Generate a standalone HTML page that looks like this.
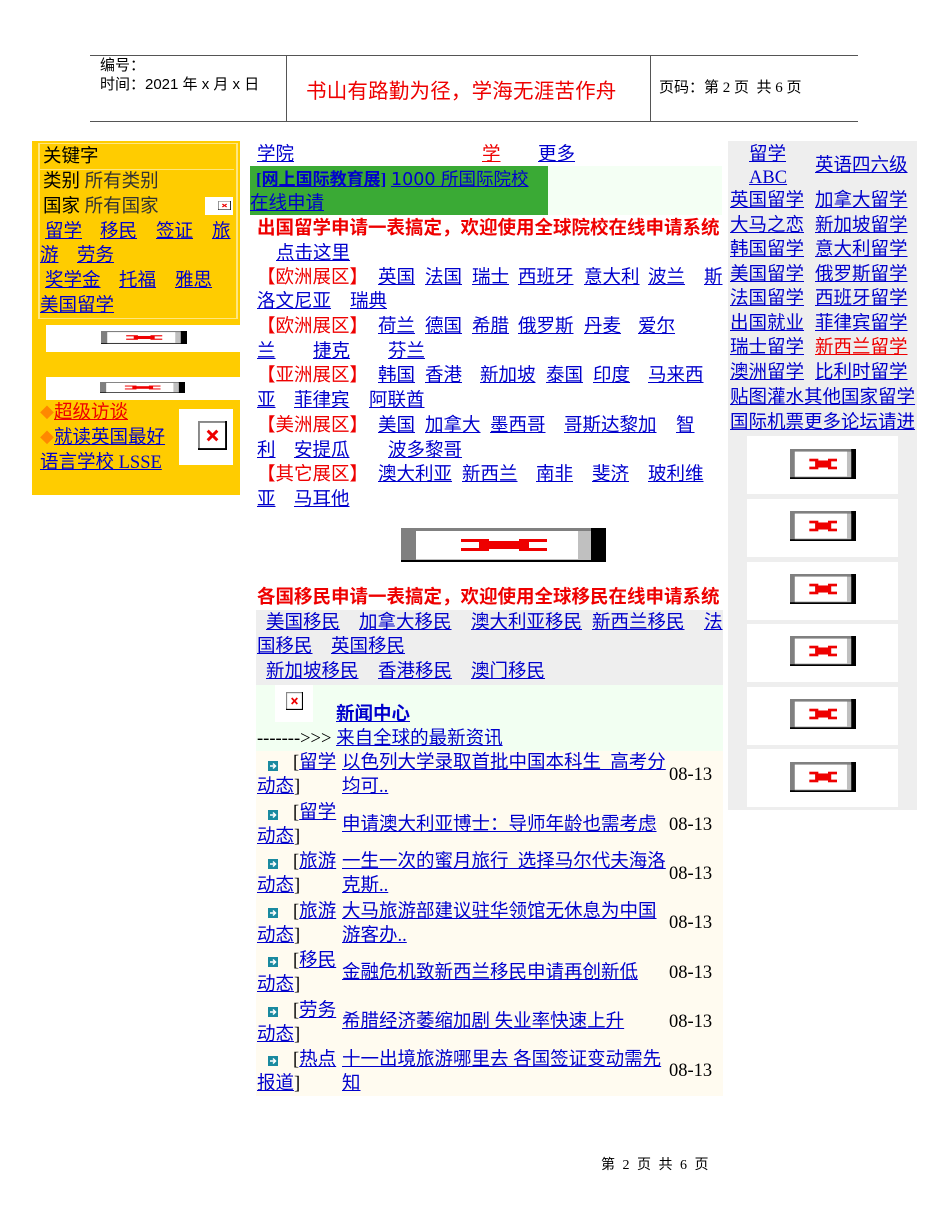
<!DOCTYPE html>
<html><head><meta charset="utf-8">
<style>
body{margin:0;width:950px;height:1230px;position:relative;background:#fff;font-family:"Liberation Serif","Noto Sans CJK SC",sans-serif;overflow:hidden}
.t{position:absolute;white-space:nowrap;line-height:24px;font-size:18.5px;font-family:"Liberation Serif","Noto Sans CJK SC",sans-serif}
a,.a{color:#0000cc;text-decoration:underline}
.r{color:#ee0000}
.b{font-weight:bold}
.box{position:absolute}
.ph{position:absolute;display:block}
</style></head><body>
<svg width="0" height="0" style="position:absolute"><defs>
<symbol id="ph" viewBox="0 0 205 34" preserveAspectRatio="none">
<rect width="205" height="34" fill="#000"/><rect width="190" height="32" fill="#808080"/>
<rect x="15" y="3" width="175" height="29" fill="#c0c0c0"/><rect x="15" y="3" width="162" height="28" fill="#fff"/>
<rect x="60" y="11" width="28" height="3" fill="#e00"/><rect x="60" y="20" width="28" height="3" fill="#e00"/>
<rect x="118" y="11" width="28" height="3" fill="#e00"/><rect x="118" y="20" width="28" height="3" fill="#e00"/>
<rect x="78" y="13" width="50" height="8" fill="#e00"/>
</symbol>
<symbol id="bx" viewBox="0 0 30 30" preserveAspectRatio="none">
<rect width="30" height="30" fill="#000"/><rect width="28" height="28" fill="#888"/><rect x="2" y="2" width="26" height="26" fill="#fff"/>
<path d="M10 10L20 20M20 10L10 20" stroke="#e00" stroke-width="3"/>
</symbol>
<symbol id="ar" viewBox="0 0 10 10">
<rect width="10" height="10" fill="#1a8aa0"/><path d="M2 5H7M5 2.5L7.5 5L5 7.5" stroke="#fff" stroke-width="1.5" fill="none"/>
</symbol>
</defs></svg>

<!-- header -->
<div class="box" style="left:90px;top:55px;width:768px;height:1px;background:#555"></div>
<div class="box" style="left:90px;top:121px;width:768px;height:1px;background:#555"></div>
<div class="box" style="left:286px;top:55px;width:1px;height:66px;background:#555"></div>
<div class="box" style="left:650px;top:55px;width:1px;height:66px;background:#555"></div>
<div class="t" style="left:100px;top:56px;font-size:15px;line-height:20px;font-family:'Liberation Sans','Noto Sans CJK SC',sans-serif">编号：</div>
<div class="t" style="left:100px;top:75px;font-size:15px;line-height:20px;font-family:'Liberation Sans','Noto Sans CJK SC',sans-serif">时间：2021 年 x 月 x 日</div>
<div class="t r" style="left:306px;top:76px;font-size:20.5px;line-height:26px;letter-spacing:0.2px;font-family:'Noto Sans CJK SC',sans-serif">书山有路勤为径，学海无涯苦作舟</div>
<div class="t" style="left:659px;top:78px;font-size:15px;line-height:20px">页码：第 2 页&nbsp; 共 6 页</div>

<!-- left panel -->
<div class="box" style="left:32px;top:141px;width:208px;height:354px;background:#ffcc00"></div>
<div class="box" style="left:38px;top:143px;width:196px;height:174px;border:1px solid #ffe680;border-left:2px solid #ffe680;border-right:2px solid #ffe680"></div>
<div class="box" style="left:40px;top:169px;width:194px;height:1px;background:#ffe680"></div>
<div class="t" style="left:43px;top:145px">关键字</div>
<div class="t" style="left:43px;top:170px">类别 <span style="color:#333">所有类别</span></div>
<div class="t" style="left:43px;top:195px">国家 <span style="color:#333">所有国家</span></div>
<div class="box" style="left:205px;top:197px;width:28px;height:18px;background:#fff"></div>
<svg class="ph" style="left:218px;top:201px" width="13" height="9"><use href="#bx"/></svg>
<div class="t" style="left:45px;top:220px"><a>留学</a></div>
<div class="t" style="left:100px;top:220px"><a>移民</a></div>
<div class="t" style="left:156px;top:220px"><a>签证</a></div>
<div class="t" style="left:212px;top:220px"><a>旅</a></div>
<div class="t" style="left:40px;top:244px"><a>游</a></div>
<div class="t" style="left:77px;top:244px"><a>劳务</a></div>
<div class="t" style="left:45px;top:269px"><a>奖学金</a></div>
<div class="t" style="left:119px;top:269px"><a>托福</a></div>
<div class="t" style="left:175px;top:269px"><a>雅思</a></div>
<div class="t" style="left:40px;top:294px"><a>美国留学</a></div>
<div class="box" style="left:46px;top:325px;width:194px;height:27px;background:#fff"></div>
<svg class="ph" style="left:101px;top:331px" width="86" height="13"><use href="#ph"/></svg>
<div class="box" style="left:46px;top:377px;width:194px;height:23px;background:#fff"></div>
<svg class="ph" style="left:100px;top:382px" width="85" height="11"><use href="#ph"/></svg>
<div class="t" style="left:40px;top:401px"><span style="color:#f80;font-size:14px">◆</span><a style="color:#ee0000">超级访谈</a></div>
<div class="t" style="left:40px;top:426px"><span style="color:#f80;font-size:14px">◆</span><a>就读英国最好</a></div>
<div class="t" style="left:40px;top:451px"><a>语言学校 LSSE</a></div>
<div class="box" style="left:179px;top:409px;width:54px;height:56px;background:#fff"></div>
<svg class="ph" style="left:198px;top:421px" width="29" height="29"><use href="#bx"/></svg>

<!-- middle -->
<div class="t" style="left:257px;top:143px"><a>学院</a></div>
<div class="t" style="left:482px;top:143px"><a style="color:#ee0000">学</a></div>
<div class="t" style="left:538px;top:143px"><a>更多</a></div>
<div class="box" style="left:250px;top:166px;width:298px;height:49px;background:#3aaa35"></div>
<div class="box" style="left:548px;top:166px;width:174px;height:49px;background:#f4fff4"></div>
<div class="t" style="left:256px;top:168px"><a class="b" style="font-size:17px">[网上国际教育展]</a> <a style="font-family:'DejaVu Sans','Noto Sans CJK SC',sans-serif;font-size:17.5px">1000 所国际院校</a></div>
<div class="t" style="left:250px;top:192px"><a>在线申请</a></div>
<div class="t r b" style="left:257px;top:217px;font-size:18.5px">出国留学申请一表搞定，欢迎使用全球院校在线申请系统</div>
<div class="t" style="left:276px;top:242px"><a>点击这里</a></div>

<div class="t r" style="left:257px;top:266px">【欧洲展区】</div>
<div class="t" style="left:378px;top:266px"><a>英国</a></div><div class="t" style="left:425px;top:266px"><a>法国</a></div><div class="t" style="left:472px;top:266px"><a>瑞士</a></div><div class="t" style="left:518px;top:266px"><a>西班牙</a></div><div class="t" style="left:584px;top:266px"><a>意大利</a></div><div class="t" style="left:648px;top:266px"><a>波兰</a></div><div class="t" style="left:704px;top:266px"><a>斯</a></div>
<div class="t" style="left:257px;top:290px"><a>洛文尼亚</a></div><div class="t" style="left:350px;top:290px"><a>瑞典</a></div>
<div class="t r" style="left:257px;top:315px">【欧洲展区】</div>
<div class="t" style="left:378px;top:315px"><a>荷兰</a></div><div class="t" style="left:425px;top:315px"><a>德国</a></div><div class="t" style="left:472px;top:315px"><a>希腊</a></div><div class="t" style="left:518px;top:315px"><a>俄罗斯</a></div><div class="t" style="left:584px;top:315px"><a>丹麦</a></div><div class="t" style="left:638px;top:315px"><a>爱尔</a></div>
<div class="t" style="left:257px;top:340px"><a>兰</a></div><div class="t" style="left:313px;top:340px"><a>捷克</a></div><div class="t" style="left:388px;top:340px"><a>芬兰</a></div>
<div class="t r" style="left:257px;top:364px">【亚洲展区】</div>
<div class="t" style="left:378px;top:364px"><a>韩国</a></div><div class="t" style="left:425px;top:364px"><a>香港</a></div><div class="t" style="left:480px;top:364px"><a>新加坡</a></div><div class="t" style="left:546px;top:364px"><a>泰国</a></div><div class="t" style="left:593px;top:364px"><a>印度</a></div><div class="t" style="left:648px;top:364px"><a>马来西</a></div>
<div class="t" style="left:257px;top:389px"><a>亚</a></div><div class="t" style="left:294px;top:389px"><a>菲律宾</a></div><div class="t" style="left:369px;top:389px"><a>阿联酋</a></div>
<div class="t r" style="left:257px;top:414px">【美洲展区】</div>
<div class="t" style="left:378px;top:414px"><a>美国</a></div><div class="t" style="left:425px;top:414px"><a>加拿大</a></div><div class="t" style="left:490px;top:414px"><a>墨西哥</a></div><div class="t" style="left:564px;top:414px"><a>哥斯达黎加</a></div><div class="t" style="left:676px;top:414px"><a>智</a></div>
<div class="t" style="left:257px;top:439px"><a>利</a></div><div class="t" style="left:294px;top:439px"><a>安提瓜</a></div><div class="t" style="left:388px;top:439px"><a>波多黎哥</a></div>
<div class="t r" style="left:257px;top:463px">【其它展区】</div>
<div class="t" style="left:378px;top:463px"><a>澳大利亚</a></div><div class="t" style="left:462px;top:463px"><a>新西兰</a></div><div class="t" style="left:536px;top:463px"><a>南非</a></div><div class="t" style="left:592px;top:463px"><a>斐济</a></div><div class="t" style="left:648px;top:463px"><a>玻利维</a></div>
<div class="t" style="left:257px;top:488px"><a>亚</a></div><div class="t" style="left:294px;top:488px"><a>马耳他</a></div>

<svg class="ph" style="left:401px;top:528px" width="205" height="34"><use href="#ph"/></svg>

<div class="t r b" style="left:257px;top:586px;font-size:18.5px">各国移民申请一表搞定，欢迎使用全球移民在线申请系统</div>
<div class="box" style="left:256px;top:610px;width:467px;height:75px;background:#eeeeee"></div>
<div class="t" style="left:266px;top:611px"><a>美国移民</a></div><div class="t" style="left:359px;top:611px"><a>加拿大移民</a></div><div class="t" style="left:471px;top:611px"><a>澳大利亚移民</a></div><div class="t" style="left:592px;top:611px"><a>新西兰移民</a></div><div class="t" style="left:704px;top:611px"><a>法</a></div>
<div class="t" style="left:257px;top:635px"><a>国移民</a></div><div class="t" style="left:331px;top:635px"><a>英国移民</a></div>
<div class="t" style="left:266px;top:660px"><a>新加坡移民</a></div><div class="t" style="left:378px;top:660px"><a>香港移民</a></div><div class="t" style="left:471px;top:660px"><a>澳门移民</a></div>
<div class="box" style="left:256px;top:685px;width:467px;height:66px;background:#f2fff2"></div>
<div class="box" style="left:275px;top:685px;width:38px;height:37px;background:#fff"></div>
<svg class="ph" style="left:286px;top:692px" width="17" height="18"><use href="#bx"/></svg>
<div class="t b" style="left:336px;top:703px"><a>新闻中心</a></div>
<div class="t" style="left:257px;top:727px">------->>> <a>来自全球的最新资讯</a></div>
<div class="box" style="left:256px;top:751px;width:467px;height:345px;background:#fffbf0"></div>

<svg class="ph" style="left:268px;top:761px" width="10" height="10"><use href="#ar"/></svg>
<div class="t" style="left:293px;top:751px">[<a>留学</a></div><div class="t" style="left:257px;top:775px"><a>动态</a>]</div>
<div class="t" style="left:342px;top:751px"><a>以色列大学录取首批中国本科生&nbsp; 高考分</a></div><div class="t" style="left:342px;top:775px"><a>均可..</a></div><div class="t" style="left:669px;top:763px">08-13</div>

<svg class="ph" style="left:268px;top:810px" width="10" height="10"><use href="#ar"/></svg>
<div class="t" style="left:293px;top:801px">[<a>留学</a></div><div class="t" style="left:257px;top:825px"><a>动态</a>]</div>
<div class="t" style="left:342px;top:813px"><a>申请澳大利亚博士：导师年龄也需考虑</a></div><div class="t" style="left:669px;top:813px">08-13</div>

<svg class="ph" style="left:268px;top:859px" width="10" height="10"><use href="#ar"/></svg>
<div class="t" style="left:293px;top:850px">[<a>旅游</a></div><div class="t" style="left:257px;top:874px"><a>动态</a>]</div>
<div class="t" style="left:342px;top:850px"><a>一生一次的蜜月旅行&nbsp; 选择马尔代夫海洛</a></div><div class="t" style="left:342px;top:874px"><a>克斯..</a></div><div class="t" style="left:669px;top:862px">08-13</div>

<svg class="ph" style="left:268px;top:908px" width="10" height="10"><use href="#ar"/></svg>
<div class="t" style="left:293px;top:900px">[<a>旅游</a></div><div class="t" style="left:257px;top:924px"><a>动态</a>]</div>
<div class="t" style="left:342px;top:900px"><a>大马旅游部建议驻华领馆无休息为中国</a></div><div class="t" style="left:342px;top:924px"><a>游客办..</a></div><div class="t" style="left:669px;top:911px">08-13</div>

<svg class="ph" style="left:268px;top:957px" width="10" height="10"><use href="#ar"/></svg>
<div class="t" style="left:293px;top:949px">[<a>移民</a></div><div class="t" style="left:257px;top:973px"><a>动态</a>]</div>
<div class="t" style="left:342px;top:961px"><a>金融危机致新西兰移民申请再创新低</a></div><div class="t" style="left:669px;top:961px">08-13</div>

<svg class="ph" style="left:268px;top:1007px" width="10" height="10"><use href="#ar"/></svg>
<div class="t" style="left:293px;top:999px">[<a>劳务</a></div><div class="t" style="left:257px;top:1023px"><a>动态</a>]</div>
<div class="t" style="left:342px;top:1010px"><a>希腊经济萎缩加剧 失业率快速上升</a></div><div class="t" style="left:669px;top:1010px">08-13</div>

<svg class="ph" style="left:268px;top:1056px" width="10" height="10"><use href="#ar"/></svg>
<div class="t" style="left:293px;top:1048px">[<a>热点</a></div><div class="t" style="left:257px;top:1072px"><a>报道</a>]</div>
<div class="t" style="left:342px;top:1048px"><a>十一出境旅游哪里去 各国签证变动需先</a></div><div class="t" style="left:342px;top:1072px"><a>知</a></div><div class="t" style="left:669px;top:1059px">08-13</div>

<!-- right panel -->
<div class="box" style="left:728px;top:141px;width:189px;height:669px;background:#eeeeee"></div>
<div class="t" style="left:749px;top:143px"><a>留学</a></div>
<div class="t" style="left:749px;top:166px"><a>ABC</a></div>
<div class="t" style="left:815px;top:154px"><a>英语四六级</a></div>
<div class="t" style="left:730px;top:189px"><a>英国留学</a></div><div class="t" style="left:815px;top:189px"><a>加拿大留学</a></div>
<div class="t" style="left:730px;top:214px"><a>大马之恋</a></div><div class="t" style="left:815px;top:214px"><a>新加坡留学</a></div>
<div class="t" style="left:730px;top:238px"><a>韩国留学</a></div><div class="t" style="left:815px;top:238px"><a>意大利留学</a></div>
<div class="t" style="left:730px;top:263px"><a>美国留学</a></div><div class="t" style="left:815px;top:263px"><a>俄罗斯留学</a></div>
<div class="t" style="left:730px;top:287px"><a>法国留学</a></div><div class="t" style="left:815px;top:287px"><a>西班牙留学</a></div>
<div class="t" style="left:730px;top:312px"><a>出国就业</a></div><div class="t" style="left:815px;top:312px"><a>菲律宾留学</a></div>
<div class="t" style="left:730px;top:336px"><a>瑞士留学</a></div><div class="t" style="left:815px;top:336px"><a style="color:#ee0000">新西兰留学</a></div>
<div class="t" style="left:730px;top:361px"><a>澳洲留学</a></div><div class="t" style="left:815px;top:361px"><a>比利时留学</a></div>
<div class="t" style="left:730px;top:386px"><a>贴图灌水</a><a>其他国家留学</a></div>
<div class="t" style="left:730px;top:411px"><a>国际机票</a><a>更多论坛请进</a></div>

<div class="box" style="left:747px;top:436px;width:151px;height:58px;background:#fff"></div><svg class="ph" style="left:790px;top:449px" width="66" height="30"><use href="#ph"/></svg>
<div class="box" style="left:747px;top:499px;width:151px;height:58px;background:#fff"></div><svg class="ph" style="left:790px;top:511px" width="66" height="30"><use href="#ph"/></svg>
<div class="box" style="left:747px;top:562px;width:151px;height:58px;background:#fff"></div><svg class="ph" style="left:790px;top:574px" width="66" height="30"><use href="#ph"/></svg>
<div class="box" style="left:747px;top:624px;width:151px;height:58px;background:#fff"></div><svg class="ph" style="left:790px;top:636px" width="66" height="30"><use href="#ph"/></svg>
<div class="box" style="left:747px;top:687px;width:151px;height:58px;background:#fff"></div><svg class="ph" style="left:790px;top:699px" width="66" height="30"><use href="#ph"/></svg>
<div class="box" style="left:747px;top:749px;width:151px;height:58px;background:#fff"></div><svg class="ph" style="left:790px;top:762px" width="66" height="30"><use href="#ph"/></svg>

<!-- footer -->
<div class="t" style="left:601px;top:1157px;font-size:14px;line-height:18px;word-spacing:4px">第 2 页 共 6 页</div>
</body></html>
